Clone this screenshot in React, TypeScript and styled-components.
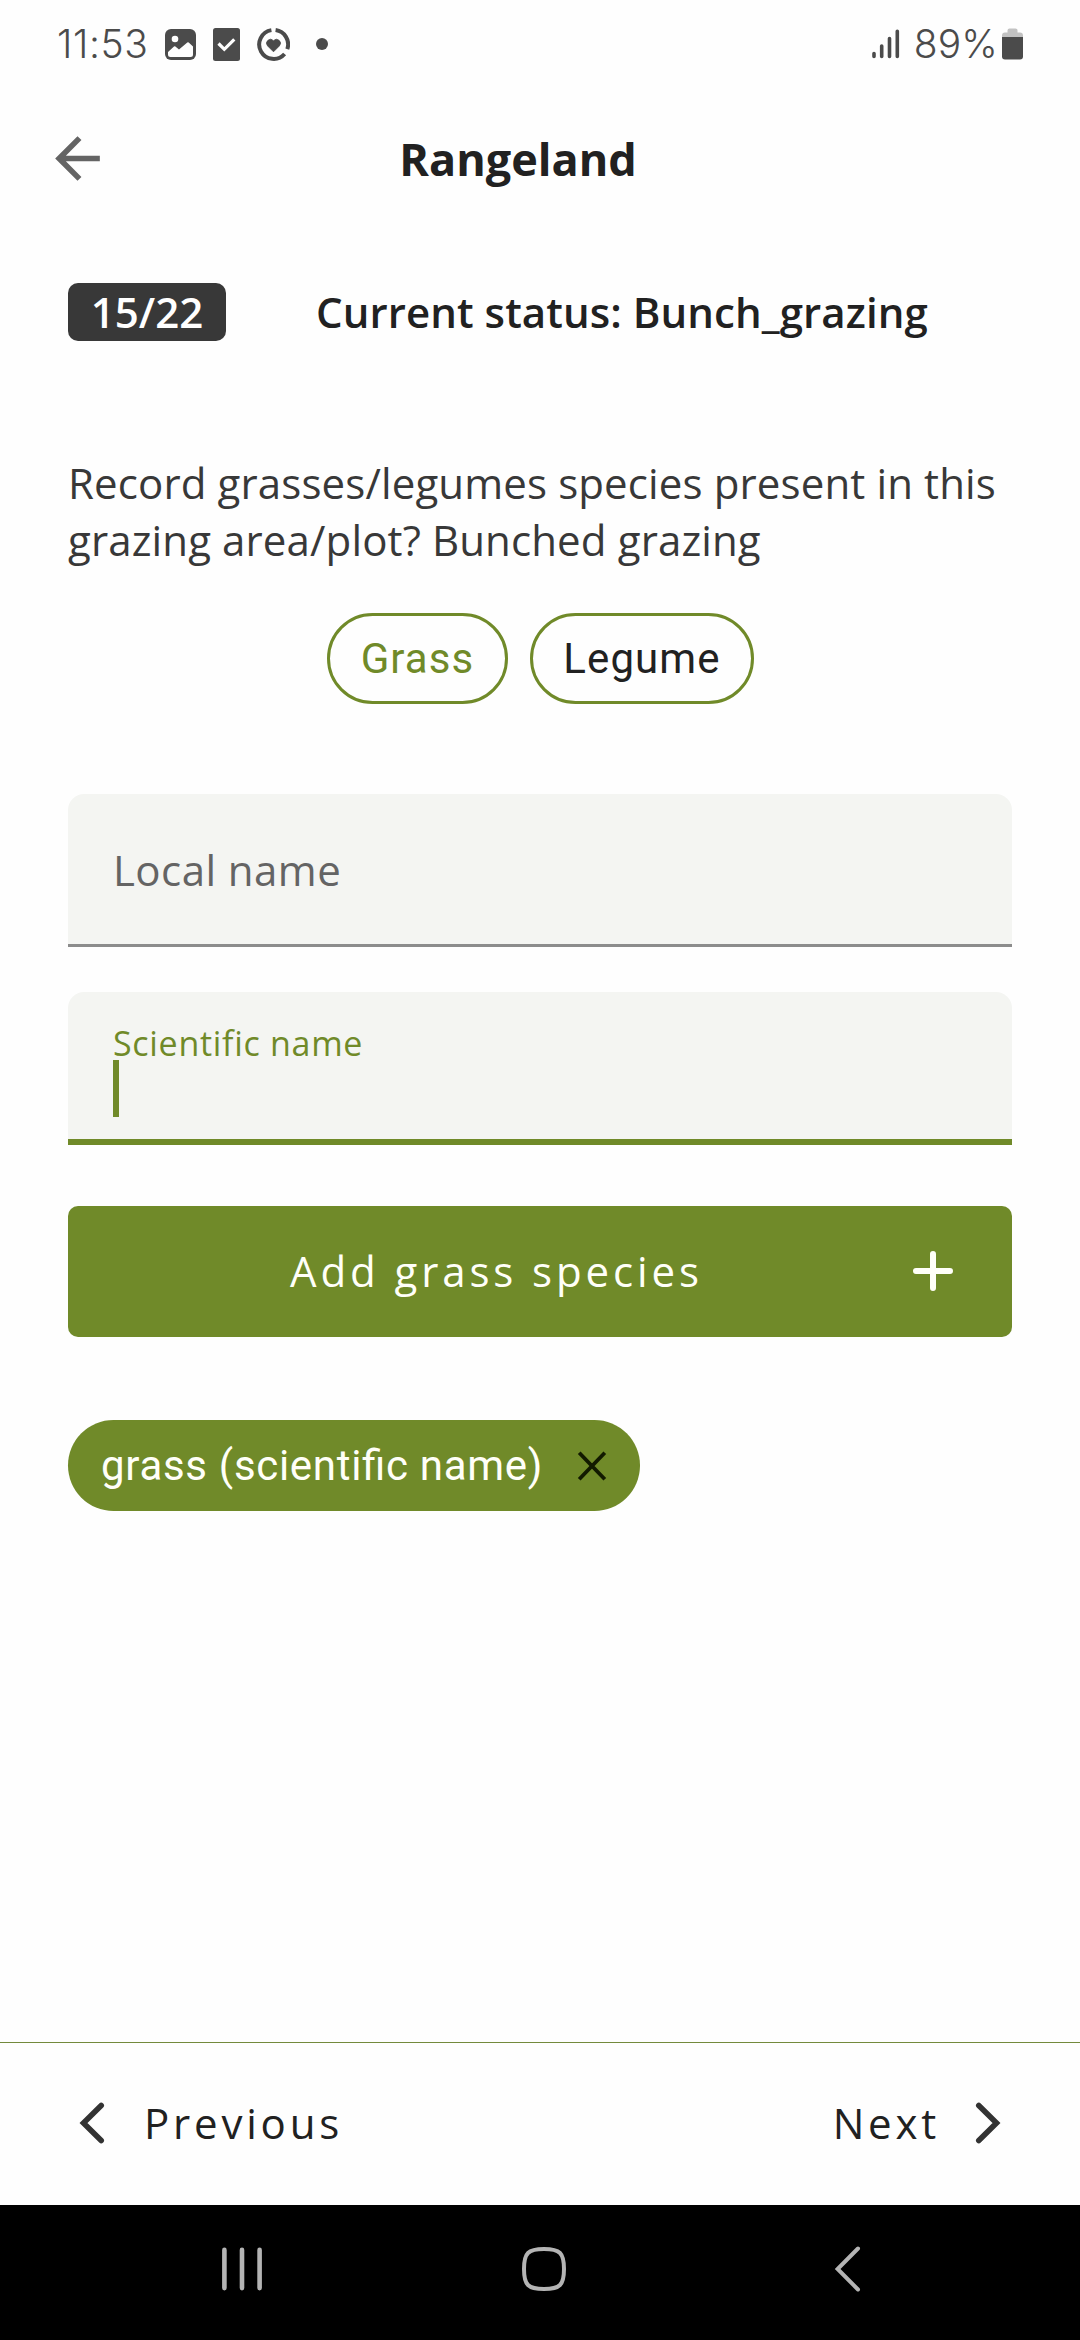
import React from "react";
import styled, { createGlobalStyle } from "styled-components";

const GREEN = "#708a29";
const INK = "#212121";
const BODY = '"Open Sans", "Noto Sans", sans-serif';
const ROBOTO = 'Roboto, "Liberation Sans", sans-serif';

const GlobalStyle = createGlobalStyle`
  *, *::before, *::after { box-sizing: border-box; }
  html, body { margin: 0; background: #fefefe; }
  button { font: inherit; color: inherit; background: none; border: 0; padding: 0; margin: 0; }
  svg { display: block; flex: none; }
`;

const Screen = styled.div`
  width: 1080px;
  height: 2340px;
  display: flex;
  flex-direction: column;
  overflow: hidden;
  background: #fefefe;
  font-family: ${BODY};
  font-size: 42px;
  line-height: 57px;
  color: ${INK};
`;

const StatusBar = styled.header`
  height: 88px;
  padding: 0 57px 0 57px;
  display: flex;
  justify-content: space-between;
  align-items: center;
  font-family: Inter, ${ROBOTO};
  font-weight: 350;
  font-size: 39px;
  line-height: 46px;
  color: #4b4b4b;
`;

const StatusGroup = styled.div`
  display: flex;
  align-items: center;
`;

const Clock = styled.span`
  width: 108px;
  letter-spacing: 0.6px;
`;

const StatusIcons = styled.div`
  display: flex;
  align-items: center;
  gap: 17px;
`;

const Percent = styled.span`
  margin: 0 4px 0 14px;
  letter-spacing: 0.1px;
`;

const AppBar = styled.div`
  height: 140px;
  padding: 0 44px;
  display: grid;
  grid-template-columns: 67px 1fr 67px;
  align-items: center;
`;

const Title = styled.h1`
  margin: 2px 0 0;
  font-size: 45px;
  line-height: 60px;
  font-weight: 700;
  text-align: center;
  padding-right: 44px;
`;

const Content = styled.main`
  flex: 1;
  padding: 55px 68px 0;
  display: flex;
  flex-direction: column;
`;

const ProgressRow = styled.div`
  display: flex;
  gap: 90px;
  font-weight: 600;
`;

const StatusText = styled.span`
  letter-spacing: 0.08px;
`;

const Badge = styled.span`
  width: 158px;
  height: 58px;
  border-radius: 10px;
  background: #383838;
  color: #fff;
  text-align: center;
`;

const Question = styled.p`
  margin: 113px 0 45px;
  letter-spacing: 0.13px;
  color: #383838;
`;

const Choices = styled.div`
  display: flex;
  justify-content: center;
  gap: 22px;
  padding-left: 1px;
`;

const Choice = styled.button<{ $width: number; $active?: boolean }>`
  width: ${(p) => p.$width}px;
  height: 91px;
  border: 3px solid ${GREEN};
  border-radius: 46px;
  font-family: ${ROBOTO};
  letter-spacing: 1.1px;
  color: ${(p) => (p.$active ? GREEN : INK)};
`;

const Field = styled.label<{ $focused?: boolean }>`
  height: 153px;
  display: flex;
  flex-direction: column;
  padding: ${(p) => (p.$focused ? "34px 45px 0" : "47px 45px 0")};
  border-bottom: ${(p) => (p.$focused ? `6px solid ${GREEN}` : "3px solid #8c8c8c")};
  background: #f4f5f2;
  clip-path: inset(0 round 16px 16px 0 0);
`;

const Fields = styled.div`
  display: flex;
  flex-direction: column;
  gap: 45px;
  margin: 90px 0 61px;
`;

const Placeholder = styled.span`
  color: #646464;
  letter-spacing: 0.45px;
`;

const FloatingLabel = styled.span`
  font-size: 34px;
  line-height: 34px;
  letter-spacing: 0.7px;
  color: ${GREEN};
`;

const Caret = styled.span`
  width: 6px;
  height: 57px;
  background: ${GREEN};
`;

const AddButton = styled.button`
  height: 131px;
  padding: 0 51px 2px 20px;
  display: flex;
  align-items: center;
  border-radius: 10px;
  background: ${GREEN};
  color: #fffff8;
  letter-spacing: 3.9px;
`;

const AddLabel = styled.span`
  flex: 1;
  text-align: center;
`;

const SpeciesChip = styled.div`
  align-self: flex-start;
  width: 572px;
  height: 91px;
  margin-top: 83px;
  padding: 0 30px 0 33px;
  display: flex;
  align-items: center;
  justify-content: space-between;
  border-radius: 46px;
  background: ${GREEN};
  color: #fffff8;
  font-family: ${ROBOTO};
  letter-spacing: 0.7px;
  font-feature-settings: "liga" 1;
`;

const Footer = styled.footer`
  height: 163px;
  padding: 0 76px 2px;
  display: flex;
  align-items: center;
  justify-content: space-between;
  border-top: 1px solid #738a3c;
`;

const StepButton = styled.button<{ $gap: number }>`
  display: flex;
  align-items: center;
  gap: ${(p) => p.$gap}px;
  letter-spacing: 3.8px;
`;

const StepLabel = styled.span`
  padding-bottom: 2px;
`;

const SystemNav = styled.nav`
  height: 135px;
  padding: 0 213px 7px;
  display: grid;
  grid-template-columns: 58px 58px 58px;
  justify-content: space-between;
  align-items: center;
  background: #000;

  & > :nth-child(2) {
    margin-left: 4px;
  }
`;

const PictureIcon = () => (
  <svg width="31" height="31" viewBox="0 0 31 31">
    <rect width="31" height="31" rx="6" fill="#4b4b4b" />
    <circle cx="10" cy="10" r="3.3" fill="#fefefe" />
    <path d="M3 23 L9 17.6 Q9.7 17 10.4 17.6 L14 20.6 L22.3 13.6 Q23 13 23.7 13.6 L28 17.5 V25.5 Q28 28 25.5 28 H5.5 Q3 28 3 25.5 Z" fill="#fefefe" />
  </svg>
);

const TaskIcon = () => (
  <svg width="27" height="33" viewBox="0 0 27 33">
    <rect width="27" height="33" rx="2.5" fill="#4b4b4b" />
    <path d="M5.5 15.5 L11.3 21.3 L21.3 11.3" fill="none" stroke="#fefefe" strokeWidth="3.2" />
  </svg>
);

const HeartRingIcon = () => (
  <svg width="33" height="33" viewBox="0 0 33 33" fill="none" stroke="#4b4b4b" strokeWidth="4">
    <path d="M18.6 2.1 A14.5 14.5 0 0 1 30.3 21.2" />
    <path d="M27.6 26 A14.5 14.5 0 1 1 14.4 2.1" />
    <path d="M16.5 23.8 L10.6 17.9 A3.9 3.9 0 0 1 16.5 12.7 A3.9 3.9 0 0 1 22.4 17.9 Z" fill="#4b4b4b" stroke="#4b4b4b" strokeWidth="0.8" />
  </svg>
);

const Dot = styled.span`
  width: 12px;
  height: 12px;
  margin-left: 9px;
  border-radius: 50%;
  background: #4b4b4b;
`;

const SignalIcon = () => (
  <svg width="28" height="30" viewBox="0 0 28 30" stroke="#4b4b4b" strokeWidth="3.6" strokeLinecap="round">
    <path d="M2 24.6 V27.5 M9.7 17 V27.5 M17.5 9.5 V27.5 M25.3 2.3 V27.5" />
  </svg>
);

const BatteryIcon = () => (
  <svg width="21" height="32" viewBox="0 0 21 32">
    <path d="M0 9 V7.5 Q0 4.5 3 4.5 H5.5 V2.5 Q5.5 0.5 7.5 0.5 H13.5 Q15.5 0.5 15.5 2.5 V4.5 H18 Q21 4.5 21 7.5 V9 Z" fill="#c2c2c2" />
    <path d="M0 9 H21 V28.5 Q21 31.5 18 31.5 H3 Q0 31.5 0 28.5 Z" fill="#4b4b4b" />
  </svg>
);

const BackArrow = () => (
  <svg width="67" height="67" viewBox="0 0 24 24" fill="#646464">
    <path d="M20 11H7.83l5.59-5.59L12 4l-8 8 8 8 1.41-1.41L7.83 13H20v-2z" />
  </svg>
);

const PlusIcon = () => (
  <svg width="56" height="56" viewBox="0 0 56 56" stroke="#fffff8" strokeWidth="6" strokeLinecap="round">
    <path d="M28 11 V45 M11 28 H45" />
  </svg>
);

const CloseIcon = () => (
  <svg width="36" height="36" viewBox="0 0 36 36" stroke="#121a00" strokeWidth="3.8">
    <path d="M5.2 4.7 L30.8 31.3 M30.8 4.7 L5.2 31.3" />
  </svg>
);

const Chevron = ({ flip }: { flip?: boolean }) => (
  <svg width="34" height="56" viewBox="0 0 34 56" fill="none" stroke="#333" strokeWidth="5.6" strokeLinecap="round">
    <path d={flip ? "M8.8 10.5 L26.5 28 L8.8 45.5" : "M25.2 10.5 L7.5 28 L25.2 45.5"} />
  </svg>
);

const RecentsIcon = () => (
  <svg width="58" height="58" viewBox="0 0 58 58" stroke="#b4b4b4" strokeWidth="4.6" strokeLinecap="round">
    <path d="M11.4 9.9 V48.1 M29 9.9 V48.1 M46.6 9.9 V48.1" />
  </svg>
);

const HomeIcon = () => (
  <svg width="58" height="58" viewBox="0 0 58 58" fill="none" stroke="#b4b4b4" strokeWidth="4">
    <path d="M29 9 C45 9 49 13 49 29 C49 45 45 49 29 49 C13 49 9 45 9 29 C9 13 13 9 29 9 Z" />
  </svg>
);

const NavBackIcon = () => (
  <svg width="58" height="58" viewBox="0 0 58 58" fill="none" stroke="#b4b4b4" strokeWidth="4" strokeLinecap="round">
    <path d="M49 8.5 L28.6 29 L49 49.5" />
  </svg>
);

export default function App() {
  return (
    <>
      <GlobalStyle />
      <Screen>
        <StatusBar>
          <StatusGroup>
            <Clock>11:53</Clock>
            <StatusIcons>
              <PictureIcon />
              <TaskIcon />
              <HeartRingIcon />
              <Dot />
            </StatusIcons>
          </StatusGroup>
          <StatusGroup>
            <SignalIcon />
            <Percent>89%</Percent>
            <BatteryIcon />
          </StatusGroup>
        </StatusBar>
        <AppBar>
          <BackArrow />
          <Title>Rangeland</Title>
        </AppBar>
        <Content>
          <ProgressRow>
            <Badge>15/22</Badge>
            <StatusText>Current status: Bunch_grazing</StatusText>
          </ProgressRow>
          <Question>
            Record grasses/legumes species present in this grazing area/plot? Bunched grazing
          </Question>
          <Choices>
            <Choice $width={181} $active>Grass</Choice>
            <Choice $width={224}>Legume</Choice>
          </Choices>
          <Fields>
            <Field>
              <Placeholder>Local name</Placeholder>
            </Field>
            <Field $focused>
              <FloatingLabel>Scientific name</FloatingLabel>
              <Caret />
            </Field>
          </Fields>
          <AddButton>
            <AddLabel>Add grass species</AddLabel>
            <PlusIcon />
          </AddButton>
          <SpeciesChip>
            <span>grass (scientific name)</span>
            <CloseIcon />
          </SpeciesChip>
        </Content>
        <Footer>
          <StepButton $gap={34}>
            <Chevron />
            <StepLabel>Previous</StepLabel>
          </StepButton>
          <StepButton $gap={30}>
            <StepLabel>Next</StepLabel>
            <Chevron flip />
          </StepButton>
        </Footer>
        <SystemNav>
          <RecentsIcon />
          <HomeIcon />
          <NavBackIcon />
        </SystemNav>
      </Screen>
    </>
  );
}
